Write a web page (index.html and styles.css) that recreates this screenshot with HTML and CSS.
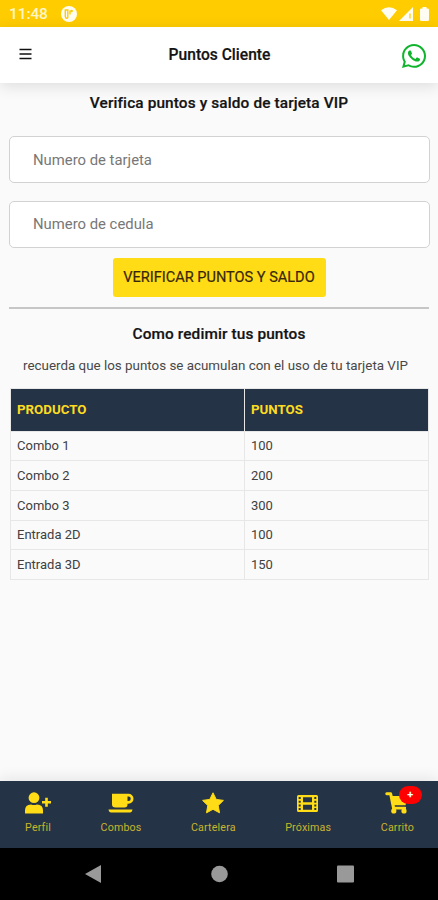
FILE: index.html
```
<!DOCTYPE html>
<html lang="es">
<head>
<meta charset="utf-8">
<title>Puntos Cliente</title>
<link rel="stylesheet" href="styles.css">
</head>
<body>
<div class="app">
  <div class="status">
    <span class="clock">11:48</span>
    <svg class="notif" width="16" height="16" viewBox="0 0 16 16"><circle cx="8" cy="8" r="8" fill="#fffdf2"/><path d="M4.300 4v6.500q0 1.800 1.700 1.800.8 0 .8-1V4zM9 4.500v4" fill="none" stroke="#fc0" stroke-width="1.400"/><circle cx="10.600" cy="5" r="1.300" fill="#fc0"/></svg>
    <svg class="signals" width="50" height="16" viewBox="0 0 50 16" fill="#fffdf2"><path d="M1 4.200Q9-1.700 17 4.200L9 14z"/><path d="M33 1v14H19z"/><path d="M30 7.500v5" stroke="#fc0" stroke-width="1.200"/><path d="M42.500 1h4v1.500h1.200q1.300 0 1.300 1.300v9.900q0 1.300-1.300 1.300h-6.400q-1.300 0-1.300-1.300V3.800q0-1.300 1.300-1.300h1.200z"/></svg>
  </div>
  <header class="navbar">
    <svg class="menu" width="13" height="12" viewBox="0 0 13 12"><path d="M.5 1.500h12M.5 6h12M.5 10.500h12" stroke="#111" stroke-width="1.700"/></svg>
    <h1>Puntos Cliente</h1>
    <svg class="whatsapp" width="24" height="24" viewBox="0 32 448 448"><path fill="#10b42c" d="M380.900 97.100C339 55.100 283.200 32 223.900 32c-122.400 0-222 99.600-222 222 0 39.100 10.200 77.300 29.600 111L0 480l117.700-30.900c32.400 17.700 68.900 27 106.100 27h.1c122.300 0 224.100-99.600 224.100-222 0-59.300-25.200-115-67.100-157zm-157 341.600c-33.200 0-65.700-8.900-94-25.700l-6.700-4-69.800 18.300L72 359.200l-4.400-7c-18.500-29.400-28.200-63.300-28.200-98.200 0-101.700 82.800-184.500 184.600-184.500 49.300 0 95.600 19.200 130.400 54.100 34.800 34.900 56.200 81.200 56.100 130.500 0 101.800-84.900 184.600-186.600 184.600zm101.200-138.200c-5.500-2.800-32.800-16.200-37.900-18-5.100-1.900-8.800-2.800-12.500 2.800-3.700 5.600-14.300 18-17.600 21.800-3.200 3.700-6.500 4.200-12 1.400-32.600-16.300-54-29.100-75.500-66-5.700-9.800 5.700-9.100 16.300-30.300 1.800-3.700.9-6.900-.5-9.700-1.400-2.800-12.500-30.100-17.100-41.200-4.500-10.800-9.100-9.300-12.500-9.500-3.200-.2-6.900-.2-10.600-.2-3.700 0-9.700 1.400-14.800 6.900-5.100 5.600-19.400 19-19.400 46.300 0 27.300 19.900 53.700 22.600 57.400 2.800 3.700 39.100 59.700 94.800 83.800 35.200 15.200 49 16.500 66.600 13.900 10.700-1.600 32.800-13.400 37.400-26.400 4.600-13 4.600-24.100 3.200-26.400-1.300-2.500-5-3.900-10.500-6.600z"/></svg>
  </header>
  <main>
    <h2 class="heading-check">Verifica puntos y saldo de tarjeta VIP</h2>
    <input class="field" type="text" placeholder="Numero de tarjeta">
    <input class="field" type="text" placeholder="Numero de cedula">
    <button class="verify">VERIFICAR PUNTOS Y SALDO</button>
    <hr>
    <h2 class="heading-redeem">Como redimir tus puntos</h2>
    <p>recuerda que los puntos se acumulan con el uso de tu tarjeta VIP</p>
    <table>
      <thead><tr><th>PRODUCTO</th><th>PUNTOS</th></tr></thead>
      <tbody>
        <tr><td>Combo 1</td><td>100</td></tr>
        <tr><td>Combo 2</td><td>200</td></tr>
        <tr><td>Combo 3</td><td>300</td></tr>
        <tr><td>Entrada 2D</td><td>100</td></tr>
        <tr><td>Entrada 3D</td><td>150</td></tr>
      </tbody>
    </table>
  </main>
  <nav class="tabs">
    <a class="tab profile"><svg width="26" height="22" viewBox="0 0 26 22"><circle cx="9" cy="5.700" r="5.400"/><path d="M0 21v-2.500Q0 12.500 6 12.500q3 1 6 0 6 0 6 6V21q0 .5-.5.500H.5Q0 21.500 0 21zM20.200 5.800h2.600v3.100H26v2.600h-3.200v3.200h-2.600v-3.200H17V8.900h3.200z"/></svg><span>Perfil</span></a>
    <a class="tab combos"><svg width="26" height="22" viewBox="0 0 26 22"><path fill-rule="evenodd" d="M4 1.800h16.500a5 5 0 0 1 0 10h-1v.8q0 3-3 3h-9q-3.500 0-3.500-3zM19.500 4.500V9h1a2.250 2.250 0 0 0 0-4.500zM.5 17.500h24q-.5 3-2.500 3H3q-2 0-2.500-3z"/></svg><span>Combos</span></a>
    <a class="tab cartelera"><svg width="26" height="22" viewBox="0 0 26 22"><path stroke="#ffdc15" stroke-width="1" stroke-linejoin="round" d="m13 .8 3.200 6.600 7.200 1-5.200 5.100 1.300 7.300-6.500-3.500-6.500 3.500 1.300-7.300-5.200-5.100 7.200-1z"/></svg><span>Cartelera</span></a>
    <a class="tab proximas"><svg width="26" height="22" viewBox="0 0 26 22"><path fill-rule="evenodd" d="M3.500 3h18q1.500 0 1.500 1.500v14q0 1.500-1.500 1.500h-18Q2 20 2 18.500v-14Q2 3 3.500 3zM8 5.200v5h9v-5zM8 12.800v5h9v-5zM3.700 5v2h2V5zM3.700 8.700v2h2v-2zM3.700 12.400v2h2v-2zM3.700 16.100v2h2v-2zM19.300 5v2h2V5zM19.300 8.700v2h2v-2zM19.300 12.400v2h2v-2zM19.300 16.100v2h2v-2z"/></svg><span>Próximas</span></a>
    <a class="tab carrito"><svg width="26" height="22" viewBox="0 0 26 22"><path d="M2.500.3h4.300q1 0 1.300 1.200L8.700 4H24l-2.500 9.300H10.600l.4 1.400h10.300q1 0 .8 1.100l-.4 1.700H8.300L5.400 3.200H2.500q-1.200 0-1.200-1.400 0-1.500 1.200-1.500z"/><circle cx="9.800" cy="18.900" r="2.600"/><circle cx="20" cy="18.900" r="2.600"/></svg><i class="badge">+</i><span>Carrito</span></a>
  </nav>
  <div class="system">
    <svg width="17" height="18" viewBox="0 0 17 18"><path d="M16 0v18L0 9z"/></svg>
    <svg width="17" height="18" viewBox="0 0 17 18"><circle cx="8.500" cy="9" r="8.300"/></svg>
    <svg width="17" height="18" viewBox="0 0 17 18"><rect y=".5" width="17" height="17" rx="1"/></svg>
  </div>
</div>
</body>
</html>
```
FILE: styles.css
```
* { box-sizing: border-box; }
body { margin: 0; font-family: Roboto, sans-serif; color: #141414; background: #fafafa; }
svg { display: block; flex: none; }
.app { width: 438px; height: 900px; display: flex; flex-direction: column; overflow: hidden; }
.status { height: 27px; flex: none; background: #fc0; display: flex; align-items: center; padding: 1px 8px 0 9px; }
.clock { color: #fff6c8; font-size: 15.500px; font-weight: 500; letter-spacing: -.1px; width: 52px; }
.signals { margin-left: auto; }
.navbar { height: 56px; flex: none; background: #fff; display: grid; grid-template-columns: 60px 1fr 60px; align-items: center; padding: 0 12px 0 19px; box-shadow: 0 3px 14px rgba(0,0,0,.12); }
.menu { margin-top: -3px; }
h1, h2 { margin: 0; font-weight: 500; text-align: center; white-space: nowrap; -webkit-text-stroke: .2px currentColor; }
h1 { font-size: 15.600px; line-height: 20px; padding-right: 6px; }
.whatsapp { justify-self: end; margin-top: 2px; }
main { flex: 1; padding: 10px 9px 0; }
h2 { font-size: 15.400px; line-height: 20px; }
.heading-check { margin-bottom: 23px; letter-spacing: .12px; }
.field { display: block; width: 421px; height: 47px; margin: 0 0 17.500px; padding: 0 23px; border: 1px solid #d2d2d2; border-radius: 5px; background: #fff; font: 14.850px Roboto, sans-serif; color: #777; }
.field::placeholder { color: #777; opacity: 1; }
.verify { display: block; width: 213px; height: 39px; margin: -7.500px auto 0; padding: 0; border: 0; border-radius: 3px; background: #ffdc15; font: 14.550px Roboto, sans-serif; color: #38270b; white-space: nowrap; -webkit-text-stroke: .2px currentColor; }
hr { height: 2px; border: 0; margin: 10px 0 15px; background: #c6c6c6; }
.heading-redeem { margin-bottom: 13px; letter-spacing: .12px; }
p { margin: 0 0 13px; padding-right: 7px; text-align: center; font-size: 13.380px; line-height: 18px; color: #484848; white-space: nowrap; }
table { width: 419px; margin-left: 1px; border-collapse: collapse; table-layout: fixed; font-size: 13px; color: #404040; }
th, td { border: 1px solid #e7e7e7; padding: 0 6px; text-align: left; }
th:first-child { width: 234px; }
th { height: 43px; background: #253347; color: #fddc20; font-size: 13.300px; font-weight: 700; }
td { height: 29.700px; }
.tabs { height: 67px; flex: none; background: #253347; display: flex; justify-content: space-between; padding: 11px 24px 0 25px; box-shadow: 0 -2px 14px rgba(0,0,0,.09); }
.tab { position: relative; display: flex; flex-direction: column; align-items: center; gap: 5px; color: #c9b52b; font-size: 10.700px; line-height: 18px; letter-spacing: .15px; }
.tab svg { fill: #ffdc15; }
.badge { position: absolute; top: -6px; left: 18px; width: 23px; height: 18px; border-radius: 9px; background: #f00; color: #fff; font: bold 11px/18px Roboto, sans-serif; text-align: center; }
.system { height: 52px; flex: none; background: #000; display: flex; justify-content: center; align-items: center; gap: 109px; fill: #999; }
```
